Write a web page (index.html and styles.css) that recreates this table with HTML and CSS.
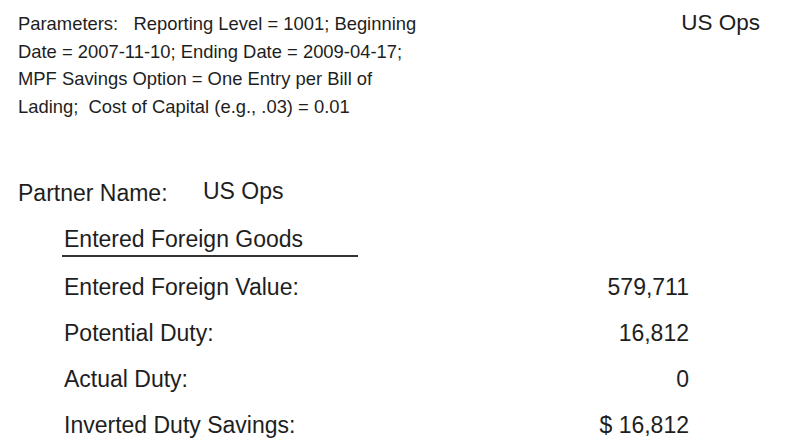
FILE: index.html
```html
<!DOCTYPE html>
<html lang="en">
  <head>
    <meta charset="UTF-8" />
    <title>Inverted Duty Savings</title>
    <link rel="stylesheet" href="styles.css">
  </head>
  <body>
    <div class="report">
      <div class="header">
        <p class="params">
          Parameters:&nbsp;&nbsp; Reporting Level = 1001; Beginning<br />
          Date = 2007-11-10; Ending Date = 2009-04-17;<br />
          MPF Savings Option = One Entry per Bill of<br />
          Lading;&nbsp; Cost of Capital (e.g., .03) = 0.01
        </p>
        <div class="org">US Ops</div>
      </div>
      <div class="partner">
        <span class="partner-label">Partner Name:</span>
        <span class="partner-name">US Ops</span>
      </div>
      <div class="section">
        <div class="section-title">Entered Foreign Goods</div>
        <div class="rows">
          <div class="row">
            <span class="label">Entered Foreign Value:</span>
            <span class="value">579,711</span>
          </div>
          <div class="row">
            <span class="label">Potential Duty:</span>
            <span class="value">16,812</span>
          </div>
          <div class="row">
            <span class="label">Actual Duty:</span>
            <span class="value">0</span>
          </div>
          <div class="row">
            <span class="label">Inverted Duty Savings:</span>
            <span class="value">$ 16,812</span>
          </div>
        </div>
      </div>
    </div>
  </body>
</html>
```

FILE: styles.css
```css
body {
  margin: 0;
  background: #fff;
  color: #1e1e1e;
  font-family: "Liberation Sans", Arial, sans-serif;
}
.report {
  padding: 9px 0 0 18px;
}
.header {
  display: flex;
  justify-content: space-between;
  align-items: flex-start;
  padding-right: 32px;
}
.params {
  margin: 1px 0 0 0;
  font-size: 18.4px;
  line-height: 27.5px;
  white-space: nowrap;
}
.org {
  font-size: 22.5px;
  line-height: 28px;
}
.partner {
  display: flex;
  align-items: baseline;
  margin-top: 59px;
  font-size: 23px;
  line-height: 28px;
}
.partner-label {
  width: 185px;
}
.partner-name {
  position: relative;
  top: -2px;
}
.section {
  margin: 18px 0 0 46px;
  width: 625px;
}
.section-title {
  font-size: 23px;
  line-height: 28px;
  width: 294px;
  margin-left: -2px;
  padding: 0 0 2px 2px;
  border-bottom: 2px solid #333;
}
.rows {
  margin-top: 7px;
}
.row {
  display: flex;
  justify-content: space-between;
  font-size: 23px;
  line-height: 46px;
}
```
